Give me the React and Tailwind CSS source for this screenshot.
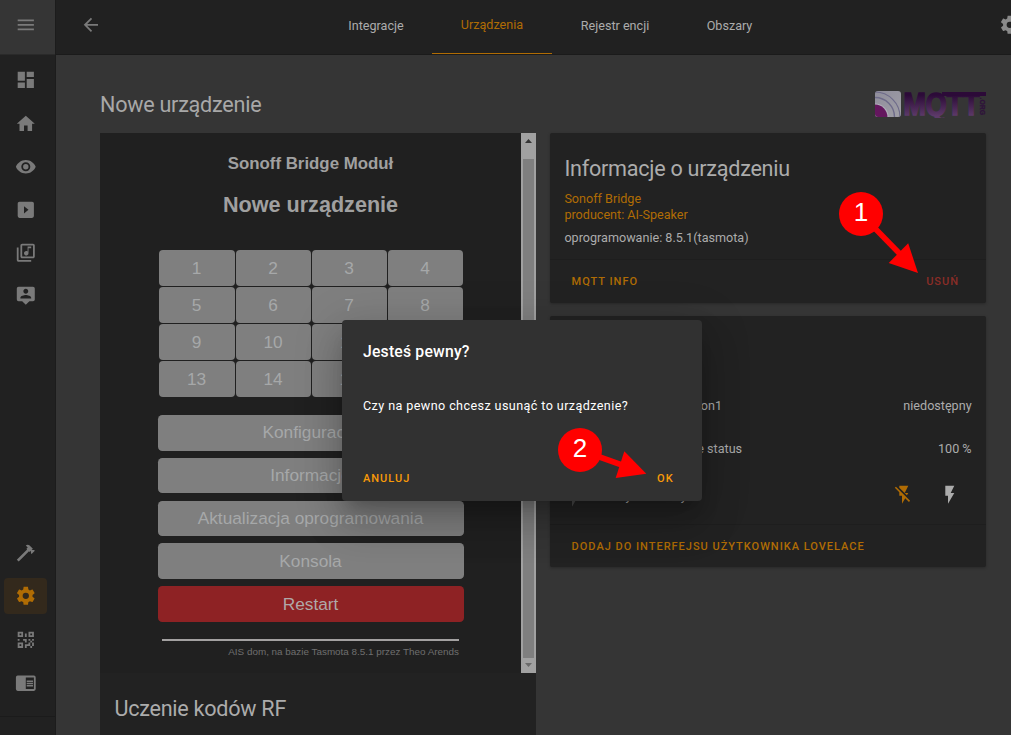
import React from "react";

const paths = {
  menu: "M3,6H21V8H3V6M3,11H21V13H3V11M3,16H21V18H3V16Z",
  dashboard: "M13,3V9H21V3M13,21H21V11H13M3,21H11V15H3M3,13H11V3H3V13Z",
  home: "M10,20V14H14V20H19V12H22L12,3L2,12H5V20H10Z",
  eye: "M12,9A3,3 0 0,0 9,12A3,3 0 0,0 12,15A3,3 0 0,0 15,12A3,3 0 0,0 12,9M12,17A5,5 0 0,1 7,12A5,5 0 0,1 12,7A5,5 0 0,1 17,12A5,5 0 0,1 12,17M12,4.5C7,4.5 2.73,7.61 1,12C2.73,16.39 7,19.5 12,19.5C17,19.5 21.27,16.39 23,12C21.27,7.61 17,4.5 12,4.5Z",
  play: "M19,3H5C3.89,3 3,3.89 3,5V19A2,2 0 0,0 5,21H19A2,2 0 0,0 21,19V5C21,3.89 20.1,3 19,3M10,16V8L15,12",
  music: "M4 6H2V20C2 21.11 2.9 22 4 22H18V20H4V6M20 2H8C6.9 2 6 2.9 6 4V16C6 17.11 6.9 18 8 18H20C21.11 18 22 17.11 22 16V4C22 2.9 21.11 2 20 2M20 16H8V4H20V16M12.5 15C13.88 15 15 13.88 15 12.5V7H18V5H14V10.5C13.58 10.19 13.07 10 12.5 10C11.12 10 10 11.12 10 12.5C10 13.88 11.12 15 12.5 15Z",
  account: "M20,2H4A2,2 0 0,0 2,4V16A2,2 0 0,0 4,18H8L12,22L16,18H20A2,2 0 0,0 22,16V4A2,2 0 0,0 20,2M12,4.3C13.5,4.3 14.7,5.5 14.7,7C14.7,8.5 13.5,9.7 12,9.7C10.5,9.7 9.3,8.5 9.3,7C9.3,5.5 10.5,4.3 12,4.3M18,15H6V14.1C6,12.1 10,11 12,11C14,11 18,12.1 18,14.1V15Z",
  hammer: "M2 19.63L13.43 8.2L12.72 7.5L14.14 6.07L12 3.89C13.2 2.7 15.09 2.7 16.27 3.89L19.87 7.5L18.45 8.91H21.29L22 9.62L18.45 13.21L17.74 12.5V9.62L16.27 11.04L15.56 10.33L4.13 21.76L2 19.63Z",
  cog: "M12,15.5A3.5,3.5 0 0,1 8.5,12A3.5,3.5 0 0,1 12,8.5A3.5,3.5 0 0,1 15.5,12A3.5,3.5 0 0,1 12,15.5M19.43,12.97C19.47,12.65 19.5,12.33 19.5,12C19.5,11.67 19.47,11.34 19.43,11L21.54,9.37C21.73,9.22 21.78,8.95 21.66,8.73L19.66,5.27C19.54,5.05 19.27,4.96 19.05,5.05L16.56,6.05C16.04,5.66 15.5,5.32 14.87,5.07L14.5,2.42C14.46,2.18 14.25,2 14,2H10C9.75,2 9.54,2.18 9.5,2.42L9.13,5.07C8.5,5.32 7.96,5.66 7.44,6.05L4.95,5.05C4.73,4.96 4.46,5.05 4.34,5.27L2.34,8.73C2.21,8.95 2.27,9.22 2.46,9.37L4.57,11C4.53,11.34 4.5,11.67 4.5,12C4.5,12.33 4.53,12.65 4.57,12.97L2.46,14.63C2.27,14.78 2.21,15.05 2.34,15.27L4.34,18.73C4.46,18.95 4.73,19.03 4.95,18.95L7.44,17.94C7.96,18.34 8.5,18.68 9.13,18.93L9.5,21.58C9.54,21.82 9.75,22 10,22H14C14.25,22 14.46,21.82 14.5,21.58L14.87,18.93C15.5,18.67 16.04,18.34 16.56,17.94L19.05,18.95C19.27,19.03 19.54,18.95 19.66,18.73L21.66,15.27C21.78,15.05 21.73,14.78 21.54,14.63L19.43,12.97Z",
  qrcode: "M3,11H5V13H3V11M11,5H13V9H11V5M9,11H13V15H11V13H9V11M15,11H17V13H19V11H21V13H19V15H21V19H19V21H17V19H13V21H11V17H15V15H17V13H15V11M19,19V15H17V19H19M15,3H21V9H15V3M17,5V7H19V5H17M3,3H9V9H3V3M5,5V7H7V5H5M3,15H9V21H3V15M5,17V19H7V17H5Z",
  book: "M13,12H20V13.5H13M13,9.5H20V11H13M13,14.5H20V16H13M21,4H3A2,2 0 0,0 1,6V19A2,2 0 0,0 3,21H21A2,2 0 0,0 23,19V6A2,2 0 0,0 21,4M21,19H12V6H21",
  back: "M20,11V13H8L13.5,18.5L12.08,19.92L4.16,12L12.08,4.08L13.5,5.5L8,11H20Z",
  flashOff: "M17,10H13L17,2H7V4.18L15.46,12.64M3.27,3L2,4.27L7,9.27V13H10V22L13.58,15.86L17.73,20L19,18.73L3.27,3Z",
  flash: "M7,2V13H10V22L17,10H13L17,2H7Z",
};

function Icon({ name, className = "" }) {
  return (
    <svg viewBox="0 0 24 24" className={`size-[21.6px] shrink-0 fill-current ${className}`}>
      <path d={paths[name]} />
    </svg>
  );
}

function NavItem({ name, active }) {
  return (
    <div
      className={`mb-[7.2px] ml-1 flex h-9 w-[43px] shrink-0 items-center justify-center rounded-[4px] ${
        active ? "bg-[#33291c] text-[#b06c04]" : "text-[#7a7a7a]"
      }`}
    >
      <Icon name={name} />
    </div>
  );
}

function Sidebar() {
  return (
    <aside className="flex w-14 shrink-0 flex-col border-r border-[#1c1c1c] bg-[#212121]">
      <div className="flex h-[55px] shrink-0 items-center border-b border-[#2a2a2a] bg-[#353535] pb-[4px] pl-[15px] text-[#7a7a7a]">
        <Icon name="menu" />
      </div>
      <div className="flex flex-col pt-[7.2px]">
        {["dashboard", "home", "eye", "play", "music", "account"].map((n) => (
          <NavItem key={n} name={n} />
        ))}
      </div>
      <div className="mt-auto flex flex-col border-b border-[#1b1b1b] pb-[8.2px]">
        <NavItem name="hammer" />
        <NavItem name="cog" active />
        <NavItem name="qrcode" />
        <NavItem name="book" />
      </div>
      <div className="h-[18px] shrink-0" />
    </aside>
  );
}

function Header() {
  return (
    <header className="flex h-[55px] shrink-0 border-b border-[#1b1b1b] bg-[#212121] text-[12.6px] text-[#acacac]">
      <div className="flex w-[264px] items-center pb-1 pl-6 text-[#7a7a7a]">
        <Icon name="back" />
      </div>
      <nav className="flex text-center leading-[51px]">
        <div className="w-[112px]">Integracje</div>
        <div className="w-[120px] border-b border-[#b06c04] leading-[49px] text-[#b06c04]">Urządzenia</div>
        <div className="w-[126px]">Rejestr encji</div>
        <div className="w-[103px]">Obszary</div>
      </nav>
      <div className="flex flex-1 items-center overflow-hidden pb-1 pl-[218px] text-[#8a8a8a]">
        <Icon name="cog" />
      </div>
    </header>
  );
}

function MqttLogo() {
  return (
    <svg viewBox="0 0 112 28" className="h-7 w-28">
      <defs>
        <linearGradient id="word" gradientUnits="userSpaceOnUse" x1="0" y1="5" x2="0" y2="26">
          <stop offset="0" stopColor="#2c0a38" />
          <stop offset="1" stopColor="#5d3a69" />
        </linearGradient>
        <linearGradient id="tile" x1="0" y1="0" x2="1" y2="1">
          <stop offset="0" stopColor="#8f8d9b" />
          <stop offset="1" stopColor="#a09fa7" />
        </linearGradient>
        <clipPath id="tileClip">
          <rect x="1" y="1" width="26" height="26" rx="3" />
        </clipPath>
      </defs>
      <g clipPath="url(#tileClip)">
        <rect x="1" y="1" width="26" height="26" fill="url(#tile)" />
        <circle cx="1" cy="27" r="25" fill="none" stroke="#6e6b8a" strokeWidth="1.2" />
        <circle cx="1" cy="27" r="19.5" fill="none" stroke="#6e6b8a" strokeWidth="1.4" />
        <circle cx="1" cy="27" r="13.6" fill="#b0aeba" />
        <circle cx="1" cy="27" r="12.4" fill="#64175e" />
      </g>
      <text
        x="29.5" y="25" textLength="76" lengthAdjust="spacingAndGlyphs"
        fill="url(#word)" stroke="url(#word)" strokeWidth="1.7"
        className="font-['Liberation_Sans',sans-serif] text-[32px] font-bold"
      >
        MQTT
      </text>
      <path d="M68 2H112V6H68Z" fill="#2c0a38" />
      <text
        transform="translate(105.8 7.5) rotate(90)" textLength="17.5" lengthAdjust="spacingAndGlyphs"
        fill="#2f123b" stroke="#2f123b" strokeWidth="0.3" className="font-['Liberation_Sans',sans-serif] text-[7.8px] font-bold"
      >
        .ORG
      </text>
    </svg>
  );
}

const menuButtons = ["Konfiguracja", "Informacje", "Aktualizacja oprogramowania", "Konsola"];

function DevicePanel() {
  return (
    <div className="flex h-[540px] bg-[#202020] font-['Liberation_Sans',Arial,sans-serif]">
      <div className="flex w-[421px] flex-col items-center text-[#a0a0a0]">
        <h3 className="mt-[21px] text-[16.85px] leading-5 font-bold">Sonoff Bridge Moduł</h3>
        <h2 className="mt-[18px] text-[21.6px] leading-[26px] font-bold">Nowe urządzenie</h2>
        <div className="mt-[32px] grid w-[304px] grid-cols-[76px_75px_75px_75px] gap-px text-[17.28px]">
          {Array.from({ length: 16 }, (_, i) => (
            <div key={i} className="h-9 rounded-[4px] bg-[#7f7f7f] text-center leading-9 text-[#a6a8a9]">
              {i + 1}
            </div>
          ))}
        </div>
        <div className="mt-[18px] flex w-[306px] flex-col gap-[7.2px] text-center text-[17.28px] leading-[35.6px]">
          {menuButtons.map((label) => (
            <div key={label} className="h-[35.6px] rounded-[4.3px] bg-[#7f7f7f] text-[#a6a8a9] last-of-type:leading-9 nth-[4]:leading-[36.6px]">
              {label}
            </div>
          ))}
          <div className="h-[35.6px] rounded-[4.3px] bg-[#8e2224] leading-[36.6px] text-[#b0a8a8]">Restart</div>
        </div>
        <div className="mt-[17px] w-[297px] border-t-2 border-[#a3a1a1] pt-[5px] text-right text-[9.9px] leading-3 text-[#6f6f6f]">
          AIS dom, na bazie Tasmota 8.5.1 przez Theo Arends
        </div>
      </div>
      <div className="flex w-[15px] flex-col items-center bg-[#a1a1a1]">
        <svg viewBox="0 0 15 26" className="h-[26px] w-[15px] shrink-0">
          <path d="M4 10L7.5 6L11 10Z" fill="#353535" />
        </svg>
        <div className="w-[11px] flex-1 bg-[#7f7f7f]" />
        <svg viewBox="0 0 15 15" className="h-[15px] w-[15px] shrink-0">
          <path d="M4 5L7.5 9L11 5Z" fill="#6a6a6a" />
        </svg>
      </div>
    </div>
  );
}

function InfoCard() {
  return (
    <section className="flex h-[170px] flex-col rounded-[2px] bg-[#222222] shadow-[0_1px_3px_rgba(0,0,0,0.25)]">
      <div className="flex-1 px-[14.4px] pt-[22px] text-[12.6px] text-[#acacac]">
        <h2 className="text-[21.6px] leading-7 tracking-[-0.26px]">Informacje o urządzeniu</h2>
        <p className="mt-[8px] leading-4 text-[#b06c04]">
          Sonoff Bridge
          <br />
          producent: AI-Speaker
        </p>
        <p className="mt-[7px] leading-4">oprogramowanie: 8.5.1(tasmota)</p>
      </div>
      <div className="flex h-[44px] items-center justify-between border-t border-[#1e1e1e] pt-px pr-[27px] pl-[21.6px] text-[11.025px] font-medium tracking-[0.984px]">
        <span className="text-[#b06c04]">MQTT INFO</span>
        <span className="text-[#8a2d27]">USUŃ</span>
      </div>
    </section>
  );
}

function EntityRow({ name, width, children }) {
  return (
    <div className="flex h-[43px] items-center">
      <Icon name="flash" className="mt-[6px] ml-[13px] text-[#4a4a4a]" />
      <div className={`ml-[16px] text-right whitespace-nowrap ${width}`}>{name}</div>
      <div className="ml-auto flex items-center">{children}</div>
    </div>
  );
}

function EntitiesCard() {
  return (
    <section className="flex h-[251px] flex-col rounded-[2px] bg-[#222222] text-[12.6px] text-[#acacac] shadow-[0_1px_3px_rgba(0,0,0,0.25)]">
      <h2 className="px-[14.4px] pt-[22px] text-[21.6px] leading-7 tracking-[-0.26px]">Encje</h2>
      <div className="mt-[19px] flex flex-col pr-[14.4px]">
        <EntityRow name="Sonoff Button1" width="w-[121.5px]">niedostępny</EntityRow>
        <EntityRow name="Nowe urządzenie status" width="w-[141.5px]">100 %</EntityRow>
        <div className="pt-[2px]">
          <EntityRow name="Przycisk nowy" width="w-[86px] pt-[3px]">
            <Icon name="flashOff" className="mr-[24px] text-[#b06c04]" />
            <Icon name="flash" className="mr-[11.4px]" />
          </EntityRow>
        </div>
      </div>
      <div className="mt-auto flex h-[43px] items-center border-t border-[#1e1e1e] pt-[2px] pl-[21.6px] text-[11.025px] font-medium tracking-[0.984px] text-[#b06c04]">
        DODAJ DO INTERFEJSU UŻYTKOWNIKA LOVELACE
      </div>
    </section>
  );
}

function ConfirmDialog() {
  return (
    <div className="absolute top-[320px] left-[342px] flex h-[181px] w-[360px] flex-col rounded-[4px] bg-[#313131] px-[21px] text-white shadow-[0_11px_15px_-7px_rgba(0,0,0,0.2),0_24px_38px_3px_rgba(0,0,0,0.14),0_9px_46px_8px_rgba(0,0,0,0.12)]">
      <h2 className="mt-[20px] text-[15.75px] leading-6 font-medium tracking-[0.197px]">Jesteś pewny?</h2>
      <p className="mt-[32px] text-[12.6px] leading-5 tracking-[0.4px]">Czy na pewno chcesz usunąć to urządzenie?</p>
      <div className="mt-auto mb-[12px] flex justify-between pr-[7.4px] text-[11.025px] leading-5 font-medium tracking-[0.984px] text-[#f89a08]">
        <span>ANULUJ</span>
        <span>OK</span>
      </div>
    </div>
  );
}

function Markers() {
  return (
    <svg viewBox="0 0 1011 735" className="pointer-events-none absolute inset-0 h-[735px] w-[1011px]">
      <g fill="#ff0000" stroke="none">
        <path d="M861 214L900 254" stroke="#ff0000" strokeWidth="5.6" />
        <circle cx="861" cy="214" r="22" />
        <path d="M918 273L908.2 243.3L888.7 263Z" />
        <path d="M580 450L622 465" stroke="#ff0000" strokeWidth="5.6" />
        <circle cx="580" cy="450" r="22" />
        <path d="M646.3 473.7L624.3 451.3L615.7 478Z" />
      </g>
      <g fill="#ffffff" textAnchor="middle" className="font-['Liberation_Sans',Arial,sans-serif] text-[26px]">
        <text x="861" y="221">1</text>
        <text x="580" y="457">2</text>
      </g>
    </svg>
  );
}

export default function App() {
  return (
    <div className="relative flex h-[735px] w-[1011px] overflow-hidden bg-[#353535] font-[Roboto,sans-serif]">
      <Sidebar />
      <div className="flex min-w-0 flex-1 flex-col">
        <Header />
        <main className="flex flex-1 flex-col overflow-hidden pr-[25px] pl-11">
          <div className="flex h-[78px] shrink-0 items-center justify-between pt-5">
            <h1 className="pt-[2px] text-[21.6px] leading-7 tracking-[-0.26px] text-[#a8a8a8]">Nowe urządzenie</h1>
            <MqttLogo />
          </div>
          <div className="flex gap-[14px]">
            <section className="w-[436px] bg-[#222222]">
              <DevicePanel />
              <h2 className="h-[80px] pt-[22px] pl-[14.4px] text-[21.6px] leading-7 tracking-[-0.26px] text-[#acacac]">
                Uczenie kodów RF
              </h2>
            </section>
            <div className="flex w-[436px] flex-col gap-[13px]">
              <InfoCard />
              <EntitiesCard />
            </div>
          </div>
        </main>
      </div>
      <ConfirmDialog />
      <Markers />
    </div>
  );
}
